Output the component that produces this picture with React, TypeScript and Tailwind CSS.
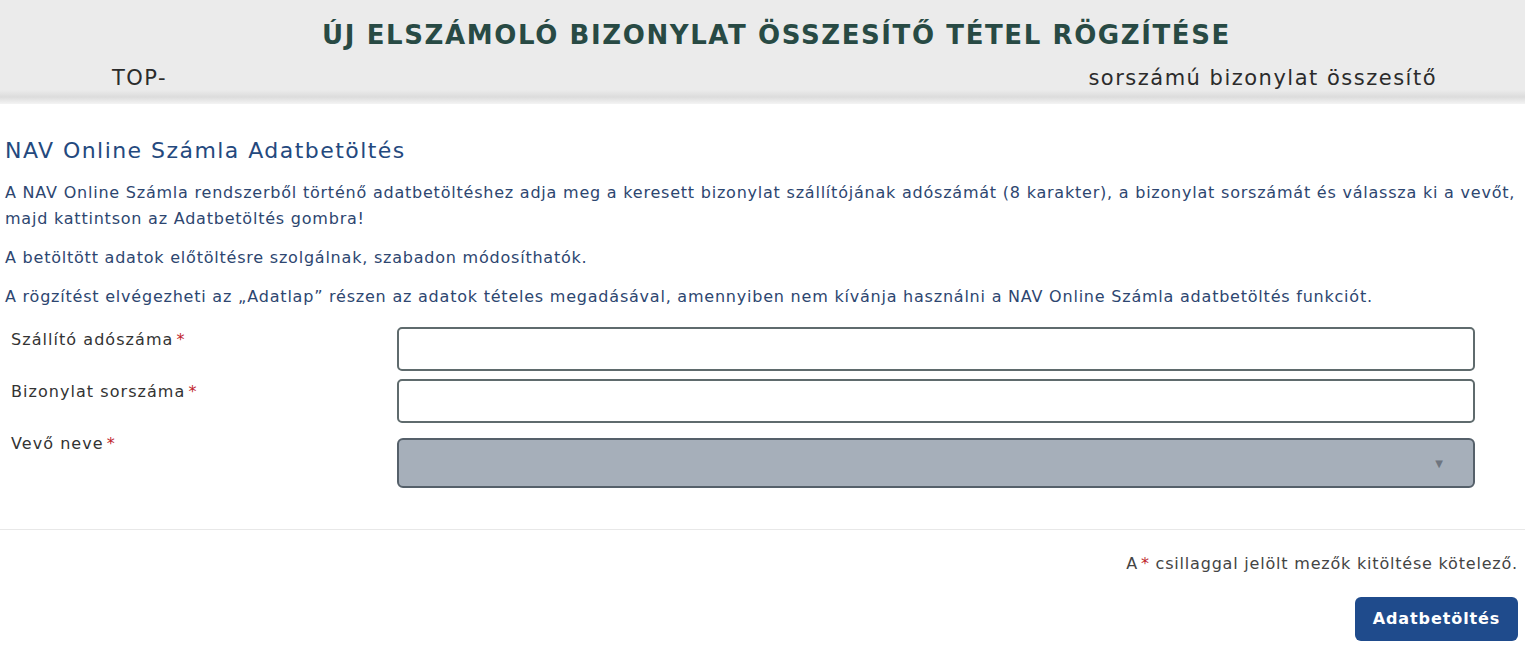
const font = { fontFamily: '"DejaVu Sans", "Noto Sans", sans-serif' };

const fields = [
  { label: "Szállító adószáma", kind: "input" },
  { label: "Bizonylat sorszáma", kind: "input" },
  { label: "Vevő neve", kind: "select" },
];

const Req = () => <span className="text-[#c0262d] ml-[3px]">*</span>;

export default function App() {
  return (
    <div className="w-[1525px] h-[646px] bg-white overflow-hidden" style={font}>
      <header className="h-[104px] bg-[linear-gradient(to_bottom,#ebebeb_0px,#ebebeb_90px,#dcdcdc_97px,#f4f4f4_104px)]">
        <h1 className="pt-[15px] pl-[28px] text-center text-[26px] leading-[40px] font-bold tracking-[1.6px] text-[#284a44]">
          ÚJ ELSZÁMOLÓ BIZONYLAT ÖSSZESÍTŐ TÉTEL RÖGZÍTÉSE
        </h1>
        <div className="mt-[8px] flex justify-between pl-[112px] pr-[88px] text-[21px] leading-[30px] tracking-[1.5px] text-[#2b2b2b]">
          <span>TOP-</span>
          <span>sorszámú bizonylat összesítő</span>
        </div>
      </header>

      <main className="pl-[5px]">
        <h2 className="mt-[32px] text-[22px] leading-[30px] tracking-[1.45px] text-[#24497e]">NAV Online Számla Adatbetöltés</h2>
        <div className="text-[16px] tracking-[0.78px] text-[#2d4670]">
          <p className="mt-[14px] leading-[26px]">
            A NAV Online Számla rendszerből történő adatbetöltéshez adja meg a keresett bizonylat szállítójának adószámát (8 karakter), a bizonylat sorszámát és válassza ki a vevőt, majd kattintson az Adatbetöltés gombra!
          </p>
          <p className="mt-[13px] leading-[26px]">A betöltött adatok előtöltésre szolgálnak, szabadon módosíthatók.</p>
          <p className="mt-[13px] leading-[26px]">
            A rögzítést elvégezheti az „Adatlap” részen az adatok tételes megadásával, amennyiben nem kívánja használni a NAV Online Számla adatbetöltés funkciót.
          </p>
        </div>

        <div className="mt-[17px] flex flex-col gap-[8px]">
          {fields.map((f) => (
            <div key={f.label} className="flex items-start">
              <label className="w-[392px] pl-[6px] pt-[2px] text-[16px] leading-[22px] tracking-[1.05px] text-[#333]">
                {f.label}
                <Req />
              </label>
              {f.kind === "input" ? (
                <input className="w-[1078px] h-[44px] rounded-[5px] border-2 border-[#5f6b6d] bg-white" />
              ) : (
                <div className="mt-[7px] w-[1078px] h-[50px] rounded-[6px] border-2 border-[#55606a] bg-[#a6afba] flex items-center justify-end pr-[30px]">
                  <span className="text-[10px] text-[#6e7580]">▼</span>
                </div>
              )}
            </div>
          ))}
        </div>
      </main>

      <div className="mt-[41px] border-t border-[#e8e8e8]" />

      <div className="pr-[7px] flex flex-col items-end">
        <p className="mt-[22px] text-[16px] leading-[24px] tracking-[0.8px] text-[#444]">
          A<Req /> csillaggal jelölt mezők kitöltése kötelező.
        </p>
        <button className="mt-[21px] w-[163px] h-[44px] rounded-[6px] bg-[#1f4b8c] text-white text-[16px] font-bold tracking-[0.9px]">
          Adatbetöltés
        </button>
      </div>
    </div>
  );
}
